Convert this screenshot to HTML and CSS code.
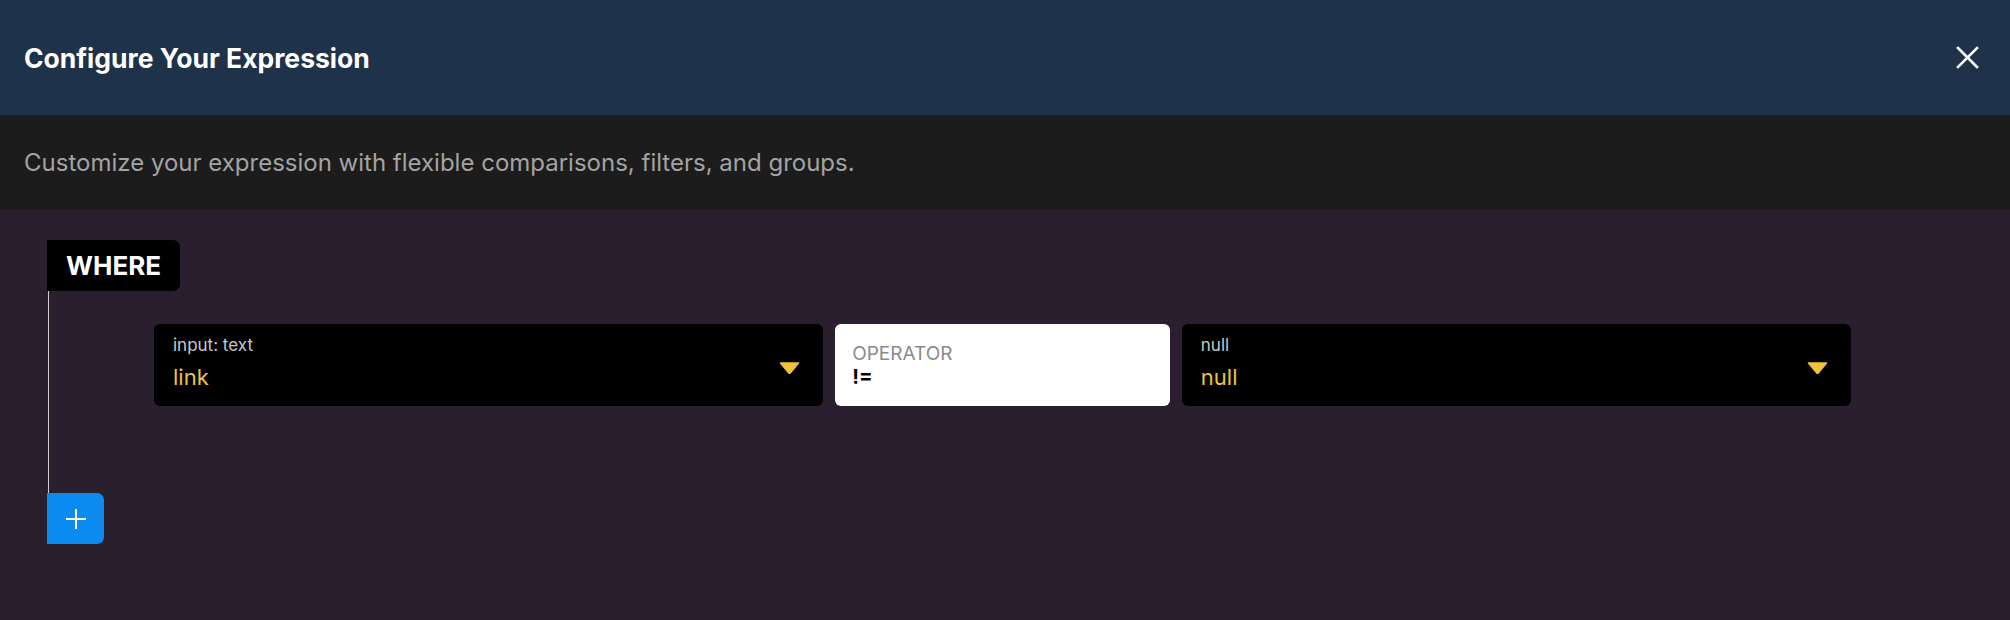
FILE: index.html
```html
<!DOCTYPE html>
<html lang="en">
<head>
    <meta charset="UTF-8">
    <meta name="viewport" content="width=device-width, initial-scale=1.0">
    <title>Configure Your Expression</title>
    <link rel="stylesheet" href="styles.css">
</head>
<body>
    <div class="modal">
        <div class="modal-header">
            <h1>Configure Your Expression</h1>
            <button class="close-btn" aria-label="Close">
                <svg width="23" height="23" viewBox="0 0 23 23">
                    <path d="M2 2 L21 21 M21 2 L2 21" stroke="#fff" stroke-width="2.6" stroke-linecap="square" fill="none"/>
                </svg>
            </button>
        </div>

        <div class="modal-subheader">
            Customize your expression with flexible comparisons, filters, and groups.
        </div>

        <div class="builder">
            <div class="group">
                <div class="where-tag">WHERE</div>

                <div class="group-body">
                    <div class="condition-row">
                        <div class="field field-select">
                            <div class="field-text">
                                <span class="field-label">input: text</span>
                                <span class="field-value">link</span>
                            </div>
                            <svg class="caret" width="21" height="12" viewBox="0 0 21 12">
                                <path d="M1.5 1 H19.5 L11.2 11 Q10.5 11.8 9.8 11 Z" fill="#edc33f" stroke="#edc33f" stroke-width="1.5" stroke-linejoin="round"/>
                            </svg>
                        </div>

                        <div class="field field-operator">
                            <span class="operator-label">OPERATOR</span>
                            <span class="operator-value">!=</span>
                        </div>

                        <div class="field field-select">
                            <div class="field-text">
                                <span class="field-label">null</span>
                                <span class="field-value">null</span>
                            </div>
                            <svg class="caret" width="21" height="12" viewBox="0 0 21 12">
                                <path d="M1.5 1 H19.5 L11.2 11 Q10.5 11.8 9.8 11 Z" fill="#edc33f" stroke="#edc33f" stroke-width="1.5" stroke-linejoin="round"/>
                            </svg>
                        </div>
                    </div>
                </div>

                <button class="add-btn" aria-label="Add condition">
                    <svg width="20" height="20" viewBox="0 0 20 20">
                        <path d="M10 0 V20 M0 10 H20" stroke="#fff" stroke-width="2" fill="none"/>
                    </svg>
                </button>
            </div>
        </div>
    </div>
</body>
</html>
```

FILE: styles.css
```css
body {
    margin: 0;
    padding: 0;
    background-color: #2a1f2e;
    font-family: 'Inter', 'Noto Sans', Arial, sans-serif;
    min-height: 100vh;
}

.modal-header {
    height: 115px;
    padding: 0 31px 0 24px;
    background-color: #1e3249;
    display: flex;
    align-items: center;
    justify-content: space-between;
}

.modal-header h1 {
    margin: 0;
    color: #fff;
    font-size: 26.5px;
    font-weight: 700;
}

.close-btn {
    background: none;
    border: none;
    padding: 0;
    cursor: pointer;
    display: flex;
}

.modal-subheader {
    height: 95px;
    padding: 0 24px;
    background-color: #1c1c1c;
    color: #a3a3a3;
    font-size: 24px;
    display: flex;
    align-items: center;
}

.builder {
    padding-top: 30px;
}

.group {
    margin-left: 47px;
}

.where-tag {
    display: inline-block;
    height: 51px;
    line-height: 51px;
    padding: 0 19px;
    background-color: #000;
    color: #fff;
    font-size: 26px;
    font-weight: 700;
    border-radius: 0 7px 7px 0;
}

.group-body {
    margin-left: 1px;
    border-left: 1px solid #cfcfcf;
    padding: 33px 159px 87px 105px;
}

/* two wide selects around a narrow operator */
.condition-row {
    display: grid;
    grid-template-columns: 2fr 1fr 2fr;
    gap: 12px;
}

.field {
    height: 82px;
    box-sizing: border-box;
    border-radius: 6px;
    min-width: 0;
}

.field-select {
    background-color: #000;
    padding: 11px 23px 0 19px;
    display: flex;
    justify-content: space-between;
    align-items: flex-start;
}

.field-text {
    display: flex;
    flex-direction: column;
}

.field-label {
    color: #c8c8c8;
    font-size: 17px;
    line-height: 20px;
}

.field-value {
    margin-top: 8px;
    color: #edc33f;
    font-size: 22px;
    line-height: 28px;
}

.caret {
    margin-top: 27px;
}

.field-operator {
    background-color: #fff;
    padding: 18px 17px 0;
    display: flex;
    flex-direction: column;
}

.operator-label {
    color: #8a8a8a;
    font-size: 19px;
    line-height: 23px;
}

.operator-value {
    color: #000;
    font-size: 20px;
    font-weight: 700;
    line-height: 24px;
}

.add-btn {
    width: 57px;
    height: 51px;
    border: none;
    padding: 0;
    background-color: #0b8af0;
    border-radius: 0 7px 7px 0;
    display: flex;
    align-items: center;
    justify-content: center;
    cursor: pointer;
}
```
